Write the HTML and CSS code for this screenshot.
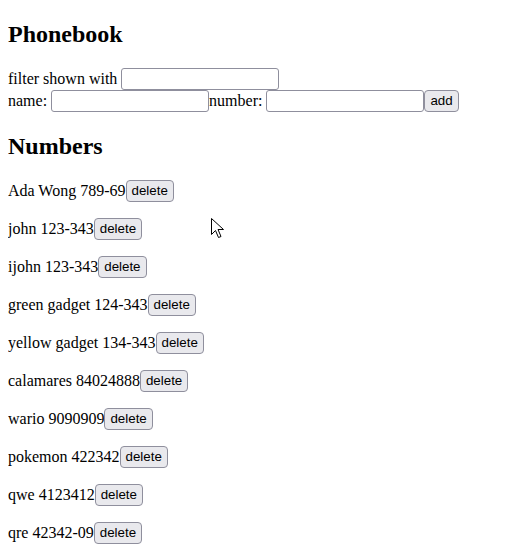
FILE: index.html
```html
<!DOCTYPE html>
<html>
<head>
<meta charset="utf-8">
<link rel="stylesheet" href="styles.css">
</head>
<body>
<div class="app">
  <h2 class="title first">Phonebook</h2>
  <div class="row">filter shown with <input class="field" type="text"></div>
  <form class="form">
    <div class="row">name: <input class="field" type="text">number: <input class="field" type="text"><button class="btn" type="button">add</button></div>
  </form>
  <h2 class="title second">Numbers</h2>
  <p class="person">Ada Wong 789-69<button class="btn">delete</button></p>
  <p class="person">john 123-343<button class="btn">delete</button></p>
  <p class="person">ijohn 123-343<button class="btn">delete</button></p>
  <p class="person">green gadget 124-343<button class="btn">delete</button></p>
  <p class="person">yellow gadget 134-343<button class="btn">delete</button></p>
  <p class="person">calamares 84024888<button class="btn">delete</button></p>
  <p class="person">wario 9090909<button class="btn">delete</button></p>
  <p class="person">pokemon 422342<button class="btn">delete</button></p>
  <p class="person">qwe 4123412<button class="btn">delete</button></p>
  <p class="person">qre 42342-09<button class="btn">delete</button></p>
</div>
<svg class="cursor" width="14" height="21" viewBox="0 0 14 21">
  <path d="M0.5 0.5 L0.5 16.5 L4.5 12.5 L7.5 19.5 L10 18.5 L7 11.5 L12.5 11.5 Z" fill="#fff" stroke="#000" stroke-width="1" stroke-linejoin="miter"/>
</svg>
</body>
</html>
```
FILE: styles.css
```css
html, body {
  background: #fff;
}
body {
  margin: 0 8px;
  font-family: "Liberation Serif", "Times New Roman", serif;
  font-size: 16px;
  color: #000;
}
.app {
  padding-top: 21px;
}
.title {
  font-size: 24px;
  font-weight: bold;
  margin: 19.92px 0;
}
.title.first {
  margin-top: 0;
  padding-top: 0;
}
.title.second {
  margin-top: 21px;
}
.form {
  margin: 0;
}
.row {
  height: 22px;
  line-height: 22px;
}
.field {
  box-sizing: border-box;
  width: 158px;
  height: 22px;
  border: 1px solid #8f8f9d;
  border-radius: 3px;
  padding: 1px 2px;
  margin: 0;
  vertical-align: bottom;
  font-family: "Liberation Sans", Arial, sans-serif;
  font-size: 13.33px;
  background: #fff;
}
.btn {
  box-sizing: border-box;
  height: 22px;
  border: 1px solid #8f8f9d;
  border-radius: 4px;
  background: #e9e9ed;
  padding: 0 5px;
  margin: 0;
  font-family: "Liberation Sans", Arial, sans-serif;
  font-size: 13.33px;
  color: #000;
  vertical-align: bottom;
}
.person {
  margin: 16px 0;
  height: 22px;
  line-height: 22px;
}
.cursor {
  position: absolute;
  left: 211px;
  top: 218px;
}
```
